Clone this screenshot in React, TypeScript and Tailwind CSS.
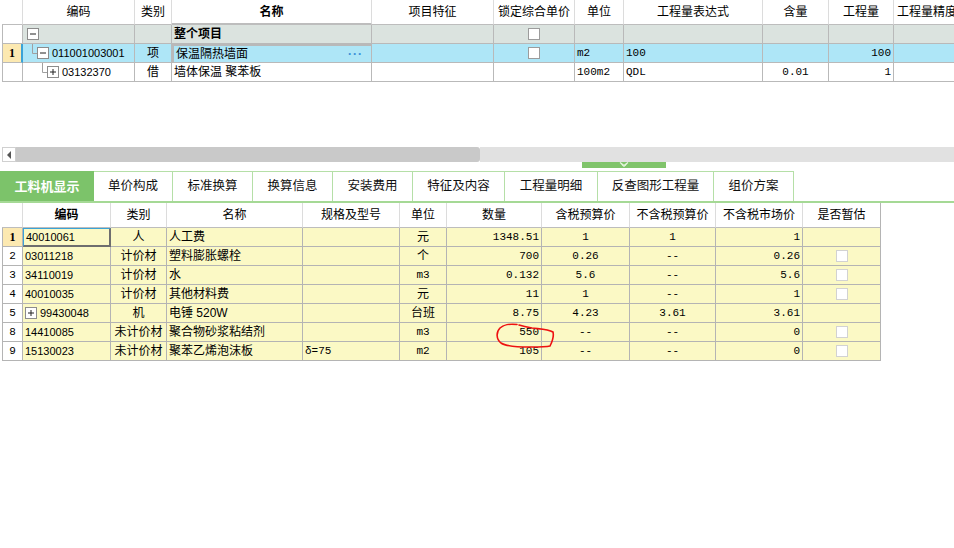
import React from 'react';

const MONO = "font-['Liberation_Mono','Noto_Sans_CJK_SC',monospace] text-[11px]";
const SANS = "font-['Liberation_Sans','Noto_Sans_CJK_SC',sans-serif] text-[11px]";

function Box({ plus }: { plus?: boolean }) {
  return (
    <svg width="12" height="12" viewBox="0 0 12 12" className="shrink-0">
      <rect x="0.5" y="0.5" width="11" height="11" fill="#fff" stroke="#8c8c8c" />
      <line x1="3" y1="6" x2="9" y2="6" stroke="#222" strokeWidth="1" />
      {plus && <line x1="6" y1="3" x2="6" y2="9" stroke="#222" strokeWidth="1" />}
    </svg>
  );
}

function Check({ light }: { light?: boolean }) {
  return (
    <div
      className={
        light
          ? 'w-[12px] h-[12px] bg-white border border-[#d2d2d2]'
          : 'w-[12px] h-[12px] bg-white border border-[#9c9c9c]'
      }
    />
  );
}

const tc = 'shrink-0 box-border h-full border-r border-b border-[#b9b9b9] flex items-center overflow-hidden whitespace-nowrap';
const th = 'shrink-0 box-border h-full border-r border-[#dcdcdc] border-b border-b-[#bdbdbd] flex items-center justify-center overflow-hidden whitespace-nowrap bg-white';

function TopTable() {
  return (
    <div className="ml-[2px] w-[1000px]">
      {/* header */}
      <div className="flex h-[25px]">
        <div className={`${th} w-[21px]`} />
        <div className={`${th} w-[112px]`}>编码</div>
        <div className={`${th} w-[37px]`}>类别</div>
        <div className={`${th} w-[200px] bg-[#fdeeb3] font-bold border-b-2 border-b-[#3aa3d8]`}>名称</div>
        <div className={`${th} w-[122px]`}>项目特征</div>
        <div className={`${th} w-[81px]`}>锁定综合单价</div>
        <div className={`${th} w-[49px]`}>单位</div>
        <div className={`${th} w-[139px]`}>工程量表达式</div>
        <div className={`${th} w-[66px]`}>含量</div>
        <div className={`${th} w-[65px]`}>工程量</div>
        <div className={`${th} w-[80px] justify-start pl-[3px]`}>工程量精度</div>
      </div>
      {/* row 0 */}
      <div className="flex h-[19px] bg-[#dbe3df]">
        <div className={`${tc} w-[21px] border-l bg-white`} />
        <div className={`${tc} w-[112px] pl-[4px]`}>
          <Box />
        </div>
        <div className={`${tc} w-[37px]`} />
        <div className={`${tc} w-[200px] pl-[2px] font-bold`}>整个项目</div>
        <div className={`${tc} w-[122px]`} />
        <div className={`${tc} w-[81px] justify-center`}>
          <Check />
        </div>
        <div className={`${tc} w-[49px]`} />
        <div className={`${tc} w-[139px]`} />
        <div className={`${tc} w-[66px]`} />
        <div className={`${tc} w-[65px]`} />
        <div className={`${tc} w-[80px]`} />
      </div>
      {/* row 1 */}
      <div className="flex h-[19px] bg-[#aee6f7]">
        <div className={`${tc} w-[21px] border-l bg-[#fce9b1] justify-center font-bold font-['Liberation_Serif',serif] border-r-2 border-r-[#3aa3d8]`}>1</div>
        <div className={`${tc} w-[112px]`}>
          <svg width="14" height="19" className="shrink-0">
            <path d="M9.5 0 V9.5 H14" stroke="#a0a0a0" fill="none" />
          </svg>
          <Box />
          <span className={`${SANS} ml-[3px] text-[11.5px]`}>011001003001</span>
        </div>
        <div className={`${tc} w-[37px] justify-center`}>项</div>
        <div className={`${tc} w-[200px] pl-[2px] border-2 border-[#2b9bd3] justify-between pr-[8px]`}>
          <span>保温隔热墙面</span>
          <span className="text-[#3a8fd8] font-bold tracking-[1px] leading-none">···</span>
        </div>
        <div className={`${tc} w-[122px]`} />
        <div className={`${tc} w-[81px] justify-center`}>
          <Check />
        </div>
        <div className={`${tc} w-[49px] pl-[2px] ${MONO}`}>m2</div>
        <div className={`${tc} w-[139px] pl-[2px] ${MONO}`}>100</div>
        <div className={`${tc} w-[66px]`} />
        <div className={`${tc} w-[65px] justify-end pr-[2px] ${MONO}`}>100</div>
        <div className={`${tc} w-[80px]`} />
      </div>
      {/* row 2 */}
      <div className="flex h-[19px] bg-white">
        <div className={`${tc} w-[21px] border-l`} />
        <div className={`${tc} w-[112px]`}>
          <svg width="24" height="19" className="shrink-0">
            <path d="M19.5 0 V9.5 H24" stroke="#a0a0a0" fill="none" />
          </svg>
          <Box plus />
          <span className={`${SANS} ml-[3px] text-[11.5px]`}>03132370</span>
        </div>
        <div className={`${tc} w-[37px] justify-center`}>借</div>
        <div className={`${tc} w-[200px] pl-[2px]`}>墙体保温 聚苯板</div>
        <div className={`${tc} w-[122px]`} />
        <div className={`${tc} w-[81px]`} />
        <div className={`${tc} w-[49px] pl-[2px] ${MONO}`}>100m2</div>
        <div className={`${tc} w-[139px] pl-[2px] ${MONO}`}>QDL</div>
        <div className={`${tc} w-[66px] justify-center ${MONO}`}>0.01</div>
        <div className={`${tc} w-[65px] justify-end pr-[2px] ${MONO}`}>1</div>
        <div className={`${tc} w-[80px]`} />
      </div>
    </div>
  );
}

type Row = {
  n: string;
  code: string;
  plus?: boolean;
  type: string;
  name: string;
  spec?: string;
  unit: string;
  unitMono?: boolean;
  qty: string;
  p1: string;
  p2: string;
  p3: string;
  cb: boolean;
  sel?: boolean;
};

const rows: Row[] = [
  { n: '1', code: '40010061', type: '人', name: '人工费', unit: '元', qty: '1348.51', p1: '1', p2: '1', p3: '1', cb: false, sel: true },
  { n: '2', code: '03011218', type: '计价材', name: '塑料膨胀螺栓', unit: '个', qty: '700', p1: '0.26', p2: '--', p3: '0.26', cb: true },
  { n: '3', code: '34110019', type: '计价材', name: '水', unit: 'm3', unitMono: true, qty: '0.132', p1: '5.6', p2: '--', p3: '5.6', cb: true },
  { n: '4', code: '40010035', type: '计价材', name: '其他材料费', unit: '元', qty: '11', p1: '1', p2: '--', p3: '1', cb: true },
  { n: '5', code: '99430048', plus: true, type: '机', name: '电锤 520W', unit: '台班', qty: '8.75', p1: '4.23', p2: '3.61', p3: '3.61', cb: false },
  { n: '8', code: '14410085', type: '未计价材', name: '聚合物砂浆粘结剂', unit: 'm3', unitMono: true, qty: '550', p1: '--', p2: '--', p3: '0', cb: true },
  { n: '9', code: '15130023', type: '未计价材', name: '聚苯乙烯泡沫板', spec: 'δ=75', unit: 'm2', unitMono: true, qty: '105', p1: '--', p2: '--', p3: '0', cb: true },
];

const bc = 'shrink-0 box-border h-full border-r border-b border-[#b4b4b4] flex items-center overflow-hidden whitespace-nowrap';

function BottomTable() {
  return (
    <div className="ml-[2px] relative w-max">
      <div className="flex h-[25px] w-max">
        <div className={`${th} w-[21px]`} />
        <div className={`${th} w-[88px] bg-[#fde9af] font-bold`}>编码</div>
        <div className={`${th} w-[56px]`}>类别</div>
        <div className={`${th} w-[136px]`}>名称</div>
        <div className={`${th} w-[97px]`}>规格及型号</div>
        <div className={`${th} w-[47px]`}>单位</div>
        <div className={`${th} w-[95px]`}>数量</div>
        <div className={`${th} w-[88px]`}>含税预算价</div>
        <div className={`${th} w-[86px]`}>不含税预算价</div>
        <div className={`${th} w-[87px]`}>不含税市场价</div>
        <div className={`${th} w-[78px] border-r-[#b4b4b4]`}>是否暂估</div>
      </div>
      {rows.map((r) => (
        <div key={r.n} className="flex h-[19px] w-max bg-[#fbf9c5]">
          {r.sel ? (
            <div className={`${bc} w-[21px] border-l bg-[#fce9b1] justify-center font-bold font-['Liberation_Serif',serif] text-[12px]`}>1</div>
          ) : (
            <div className={`${bc} w-[21px] border-l bg-white justify-center ${MONO}`}>{r.n}</div>
          )}
          <div
            className={
              r.sel
                ? `${bc} w-[88px] pl-[2px] border-t border-t-[#3aa3d8] border-l border-l-[#3aa3d8] border-r-2 border-r-[#6e6e6e] border-b-2 border-b-[#6e6e6e]`
                : `${bc} w-[88px] pl-[2px]`
            }
          >
            {r.plus && (
              <span className="mr-[3px] flex">
                <Box plus />
              </span>
            )}
            <span className={`${SANS} text-[11.5px]`}>{r.code}</span>
          </div>
          <div className={`${bc} w-[56px] justify-center`}>{r.type}</div>
          <div className={`${bc} w-[136px] pl-[2px]`}>{r.name}</div>
          <div className={`${bc} w-[97px] pl-[2px] ${MONO}`}>{r.spec ?? ''}</div>
          <div className={`${bc} w-[47px] justify-center ${r.unitMono ? MONO : ''}`}>{r.unit}</div>
          <div className={`${bc} w-[95px] justify-end pr-[2px] ${MONO}`}>{r.qty}</div>
          <div className={`${bc} w-[88px] justify-center ${MONO}`}>{r.p1}</div>
          <div className={`${bc} w-[86px] justify-center ${MONO}`}>{r.p2}</div>
          <div className={`${bc} w-[87px] justify-end pr-[2px] ${MONO}`}>{r.p3}</div>
          <div className={`${bc} w-[78px] justify-center`}>{r.cb && <Check light />}</div>
        </div>
      ))}
      {/* red hand-drawn mark around 550 */}
      <svg className="absolute left-[488px] top-[117px] pointer-events-none" width="70" height="32" viewBox="0 0 70 32">
        <path
          d="M27 4.5 C20 3.5 13 5 10 8 C6 12 6 19 11 23 C17 27 30 27 40 27 C50 27 56 27 60 26 C62 22 64 16 63 12 C58 9 50 9 42 8 C36 7 32 6 29 5"
          stroke="#ee1111"
          strokeWidth="1.6"
          fill="none"
          strokeLinecap="round"
        />
      </svg>
    </div>
  );
}

const tabs = [
  { t: '单价构成', w: 'w-[79px]' },
  { t: '标准换算', w: 'w-[80px]' },
  { t: '换算信息', w: 'w-[80px]' },
  { t: '安装费用', w: 'w-[80px]' },
  { t: '特征及内容', w: 'w-[92px]' },
  { t: '工程量明细', w: 'w-[93px]' },
  { t: '反查图形工程量', w: 'w-[116px]' },
  { t: '组价方案', w: 'w-[80px]' },
];

export default function App() {
  return (
    <div className="w-[954px] h-[548px] bg-white overflow-hidden relative text-[12px] leading-none text-black font-['Liberation_Sans','Noto_Sans_CJK_SC',sans-serif]">
      <TopTable />
      {/* horizontal scrollbar */}
      <div className="mt-[65px] flex h-[15px] items-stretch">
        <div className="w-[2px] bg-white" />
        <div className="w-[14px] bg-white border border-[#d0d0d0] flex items-center justify-center">
          <svg width="5" height="8" viewBox="0 0 5 8">
            <path d="M4 0 L0 4 L4 8 Z" fill="#555" />
          </svg>
        </div>
        <div className="w-[464px] bg-[#c9c9c9] rounded-r-[3px]" />
        <div className="flex-1 bg-[#e1e1e1]" />
      </div>
      {/* splitter */}
      <div className="flex h-[6px]">
        <div className="ml-[582px] w-[84px] bg-[#80c46b] flex items-start justify-center">
          <svg width="10" height="6" viewBox="0 0 10 6">
            <path d="M1 0.5 L5 3.5 L9 0.5" stroke="#e8f6e2" strokeWidth="1.2" fill="none" />
            <path d="M2.5 2.5 L5 4.5 L7.5 2.5" stroke="#e8f6e2" strokeWidth="1" fill="none" />
          </svg>
        </div>
      </div>
      {/* tabs */}
      <div className="mt-[3px] flex h-[32px] border-b-2 border-[#a5d995]">
        <div className="w-[94px] h-full bg-[#7cc36a] text-white font-bold text-[13px] flex items-center justify-center">工料机显示</div>
        {tabs.map((t) => (
          <div
            key={t.t}
            className={`${t.w} h-full box-border bg-white border-t border-r border-[#b5dfa7] flex items-center justify-center text-[12.5px] text-[#111]`}
          >
            {t.t}
          </div>
        ))}
      </div>
      <BottomTable />
    </div>
  );
}
